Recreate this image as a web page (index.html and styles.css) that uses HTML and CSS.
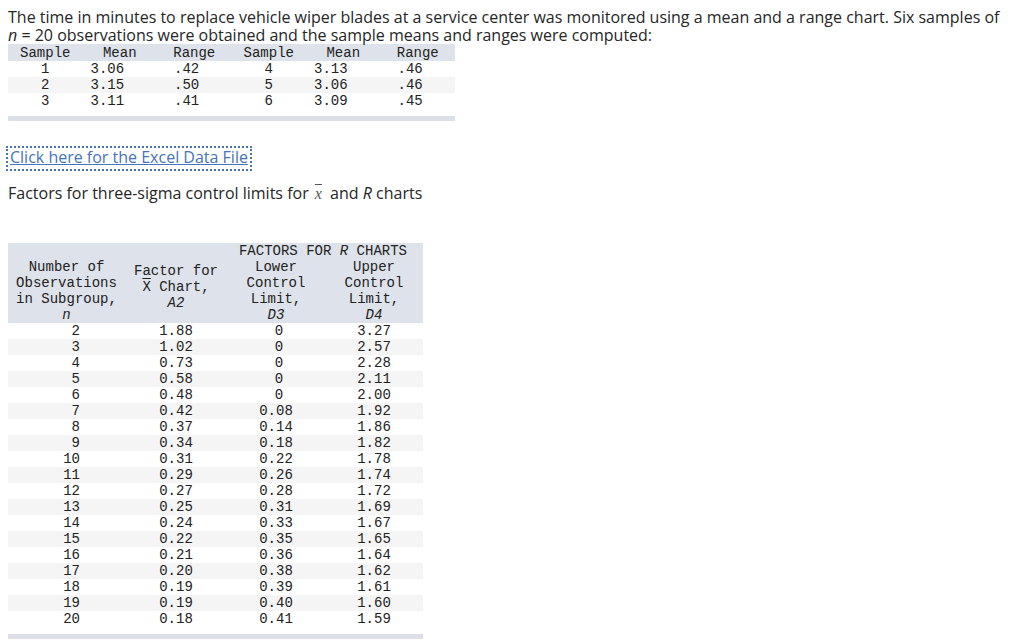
FILE: index.html
```html
<!DOCTYPE html>
<html>
<head>
<meta charset="utf-8">
<link rel="stylesheet" href="styles.css">
</head>
<body>
<p class="intro">The time in minutes to replace vehicle wiper blades at a service center was monitored using a mean and a range chart. Six samples of <i>n</i> = 20 observations were obtained and the sample means and ranges were computed:</p>

<div class="tbl1-wrap">
<table class="tbl1">
<thead>
<tr><th>Sample</th><th>Mean</th><th>Range</th><th>Sample</th><th>Mean</th><th>Range</th></tr>
</thead>
<tbody>
<tr><td class="c">1</td><td class="m">3.06</td><td class="r">.42</td><td class="c">4</td><td class="m">3.13</td><td class="r">.46</td></tr>
<tr class="alt"><td class="c">2</td><td class="m">3.15</td><td class="r">.50</td><td class="c">5</td><td class="m">3.06</td><td class="r">.46</td></tr>
<tr><td class="c">3</td><td class="m">3.11</td><td class="r">.41</td><td class="c">6</td><td class="m">3.09</td><td class="r">.45</td></tr>
</tbody>
</table>
<div class="bar"></div>
</div>

<div class="link-row"><a class="xl" href="#">Click here for the Excel Data File</a></div>

<p class="factors">Factors for three-sigma control limits for <span class="xbar">x</span> and <i>R</i> charts</p>

<div class="tbl2-wrap">
<table class="tbl2">
<thead>
<tr><th></th><th></th><th colspan="2" class="grp">FACTORS FOR <i>R</i> CHARTS</th></tr>
<tr>
<th class="bot">Number of<br>Observations<br>in Subgroup,<br><i>n</i></th>
<th class="mid">Factor for<br><span class="ov">X</span> Chart,<br><i>A2</i></th>
<th class="bot">Lower<br>Control<br>Limit,<br><i>D3</i></th>
<th class="bot">Upper<br>Control<br>Limit,<br><i>D4</i></th>
</tr>
</thead>
<tbody>
<tr><td class="n">2</td><td>1.88</td><td class="z">0</td><td>3.27</td></tr>
<tr class="alt"><td class="n">3</td><td>1.02</td><td class="z">0</td><td>2.57</td></tr>
<tr><td class="n">4</td><td>0.73</td><td class="z">0</td><td>2.28</td></tr>
<tr class="alt"><td class="n">5</td><td>0.58</td><td class="z">0</td><td>2.11</td></tr>
<tr><td class="n">6</td><td>0.48</td><td class="z">0</td><td>2.00</td></tr>
<tr class="alt"><td class="n">7</td><td>0.42</td><td>0.08</td><td>1.92</td></tr>
<tr><td class="n">8</td><td>0.37</td><td>0.14</td><td>1.86</td></tr>
<tr class="alt"><td class="n">9</td><td>0.34</td><td>0.18</td><td>1.82</td></tr>
<tr><td class="n">10</td><td>0.31</td><td>0.22</td><td>1.78</td></tr>
<tr class="alt"><td class="n">11</td><td>0.29</td><td>0.26</td><td>1.74</td></tr>
<tr><td class="n">12</td><td>0.27</td><td>0.28</td><td>1.72</td></tr>
<tr class="alt"><td class="n">13</td><td>0.25</td><td>0.31</td><td>1.69</td></tr>
<tr><td class="n">14</td><td>0.24</td><td>0.33</td><td>1.67</td></tr>
<tr class="alt"><td class="n">15</td><td>0.22</td><td>0.35</td><td>1.65</td></tr>
<tr><td class="n">16</td><td>0.21</td><td>0.36</td><td>1.64</td></tr>
<tr class="alt"><td class="n">17</td><td>0.20</td><td>0.38</td><td>1.62</td></tr>
<tr><td class="n">18</td><td>0.19</td><td>0.39</td><td>1.61</td></tr>
<tr class="alt"><td class="n">19</td><td>0.19</td><td>0.40</td><td>1.60</td></tr>
<tr><td class="n">20</td><td>0.18</td><td>0.41</td><td>1.59</td></tr>
</tbody>
</table>
<div class="bar"></div>
</div>
</body>
</html>
```

FILE: styles.css
```css
html, body {
  margin: 0;
  padding: 0;
  background: #fff;
}
body {
  padding: 8px;
  font-family: "Open Sans", "Liberation Sans", sans-serif;
  font-size: 16px;
  color: #262626;
}
.intro {
  margin: 0;
  max-width: 998px;
  line-height: 18px;
}
.tbl1-wrap {
  width: 447px;
}
table {
  border-collapse: collapse;
  font-family: "Liberation Mono", monospace;
  font-size: 14px;
  color: #222;
}
.tbl1 {
  width: 447px;
  table-layout: fixed;
}
.tbl1 th {
  background: #dee2ea;
  font-weight: normal;
  height: 17px;
  line-height: 16px;
  padding: 0;
  text-align: center;
}
.tbl1 td {
  height: 16px;
  line-height: 16px;
  padding: 0;
}
.tbl1 td.c { text-align: center; }
.tbl1 td.m { text-align: left; padding-left: 8px; }
.tbl1 td.r { text-align: left; padding-left: 17px; }
tr.alt td { background: #f5f5f5; }
.bar {
  height: 5px;
  background: #dcdfe7;
  margin-top: 7px;
}
.link-row {
  margin-top: 25px;
}
.xl {
  display: inline-block;
  color: #4674bb;
  text-decoration: underline;
  border: 2px dotted #4674bb;
  padding: 0 2px 2px 2px;
  margin-left: -2px;
  line-height: 19px;
}
.factors {
  margin: 13px 0 0 0;
  line-height: 18px;
}
.xbar {
  font-family: "Liberation Serif", serif;
  font-style: italic;
  text-decoration: overline;
  color: #555;
  margin: 0 4px 0 2px;
}
.tbl2-wrap {
  width: 415px;
  margin-top: 40px;
}
.tbl2 {
  width: 415px;
  table-layout: fixed;
}
.tbl2 th {
  background: #dee2ea;
  font-weight: normal;
  line-height: 16px;
  padding: 0;
  text-align: center;
}
.tbl2 th:nth-child(1) { width: 117px; }
.tbl2 th:nth-child(2) { width: 102px; }
.tbl2 th.grp { white-space: nowrap; text-align: right; padding-right: 16px; }
.tbl2 th.bot { vertical-align: bottom; }
.tbl2 th.mid { vertical-align: middle; padding-bottom: 8px; }
.ov { text-decoration: overline; }
.tbl2 td {
  height: 16px;
  line-height: 16px;
  padding: 0;
  text-align: center;
}
.tbl2 td.n { text-align: right; padding-right: 45px; }
.tbl2 td.z { padding-left: 6px; }
```
